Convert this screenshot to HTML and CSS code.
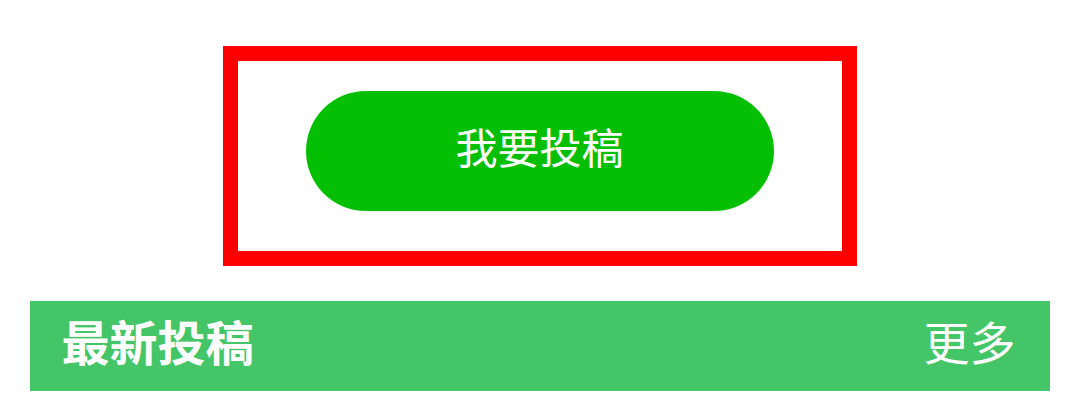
FILE: index.html
```html
<!DOCTYPE html>
<html lang="zh-CN">
<head>
<meta charset="utf-8">
<title>投稿</title>
<link rel="stylesheet" href="styles.css">
</head>
<body>
<div class="page">
  <div class="submit-box">
    <div class="submit-btn">我要投稿</div>
  </div>
  <div class="section-bar">
    <div class="section-title">最新投稿</div>
    <div class="section-more">更多</div>
  </div>
</div>
</body>
</html>
```
FILE: styles.css
```css
html, body {
  margin: 0;
  padding: 0;
  background: #ffffff;
}
body {
  font-family: "Noto Sans CJK SC", "Noto Sans", sans-serif;
}
.page {
  padding-top: 46px;
}
.submit-box {
  width: 604px;
  margin: 0 auto;
  border: 15px solid #ff0000;
  padding: 30px 0 40px;
}
.submit-btn {
  width: 468px;
  height: 120px;
  box-sizing: border-box;
  padding-bottom: 10px;
  margin: 0 auto;
  border-radius: 60px;
  background: #05bf04;
  color: #ffffff;
  font-size: 42px;
  line-height: 110px;
  text-align: center;
}
.section-bar {
  width: 1020px;
  height: 90px;
  margin: 35px auto 0;
  box-sizing: border-box;
  padding: 0 34px 12px 32px;
  background: #44c567;
  color: #ffffff;
  display: flex;
  align-items: center;
  justify-content: space-between;
}
.section-title {
  font-size: 48px;
  font-weight: bold;
  line-height: 1;
}
.section-more {
  font-size: 46px;
  line-height: 1;
}
```
